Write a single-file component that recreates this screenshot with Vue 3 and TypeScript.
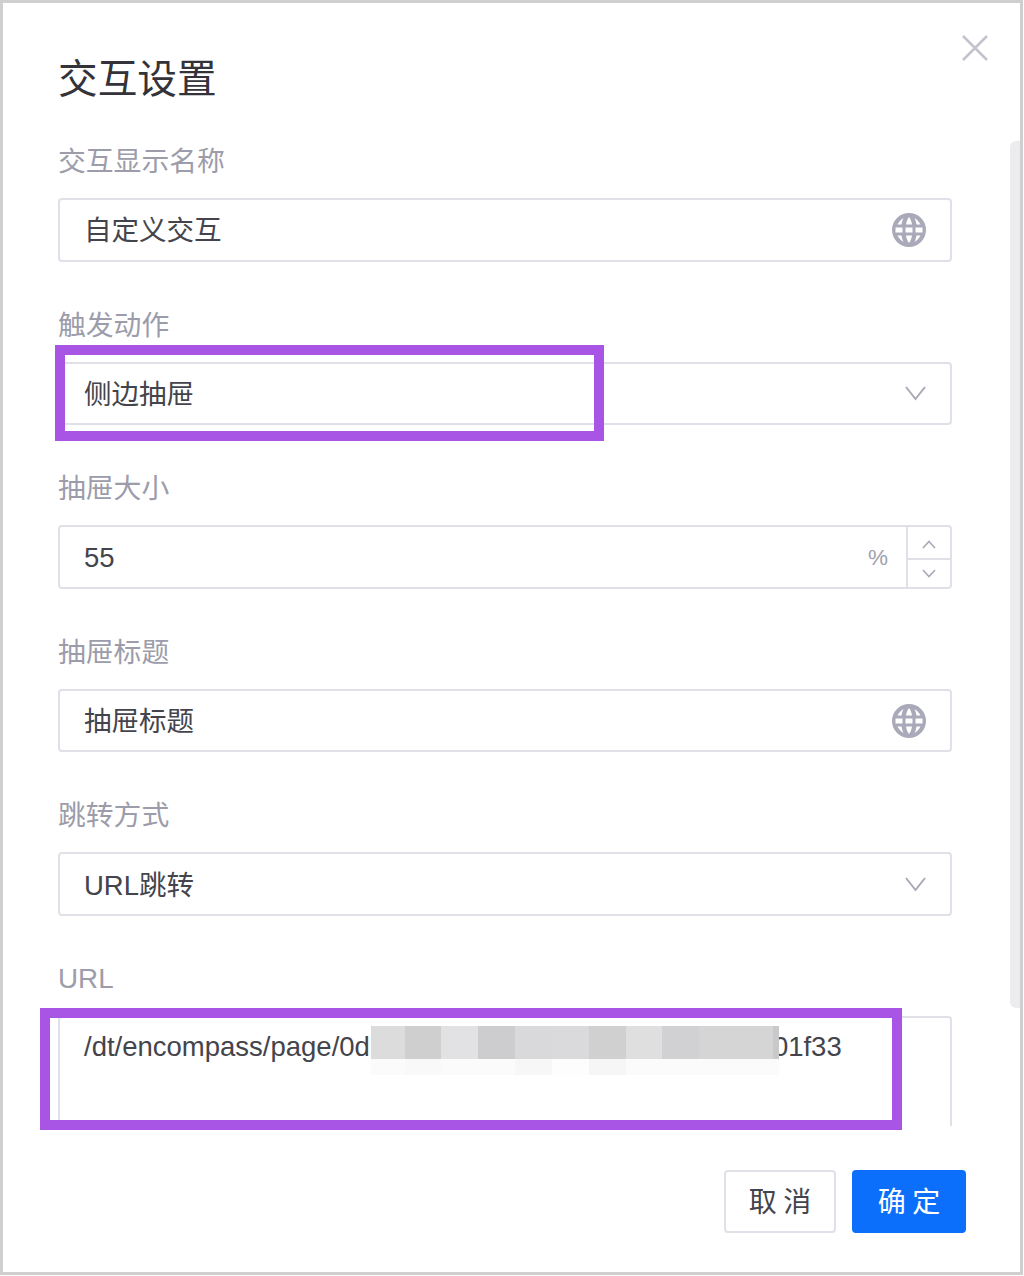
<script setup lang="ts">
const cells: [string, string, number][] = [
  ['#dcdcdd', '#fbfbfb', 34],
  ['#cfcfd0', '#f9f9f9', 36],
  ['#e2e2e4', '#fbfbfb', 37],
  ['#cdcdcf', '#fbfbfb', 37],
  ['#d9d9db', '#f7f7f7', 37],
  ['#dadadc', '#fdfdfd', 37],
  ['#d0d0d1', '#f6f6f6', 37],
  ['#dfdfdf', '#fbfbfb', 36],
  ['#d1d1d3', '#fbfbfb', 37],
  ['#d5d5d6', '#fbfbfb', 74],
  ['#c9c9cb', '#fbfbfb', 6]
]
const globeTop =
  'M6.500 12.500C8 9.500 10 7.500 12.500 6C11.500 8 11 10 10.500 12.500Z' +
  'M15 12.500C15.500 9.500 16.500 6.500 18 5C19.500 6.500 20.500 9.500 21 12.500Z' +
  'M29.500 12.500C28 9.500 26 7.500 23.500 6C24.500 8 25 10 25.500 12.500Z'
const globeMiddle = 'M4.500 15.500h7v5h-7zM14.500 15.500h7v5h-7zM24.500 15.500h7v5h-7z'
</script>

<template>
  <div class="dialog">
    <svg class="close" width="30" height="30" viewBox="0 0 30 30">
      <path d="M3 3 27 27M27 3 3 27" fill="none" stroke="#c4c4cf" stroke-width="2.6" />
    </svg>
    <h1 class="title">交互设置</h1>

    <div class="body">
      <div class="field">
        <div class="label">交互显示名称</div>
        <div class="control">
          <span class="value">自定义交互</span>
          <svg class="globe" width="36" height="36" viewBox="0 0 36 36">
            <circle cx="18" cy="18" r="17" fill="#a9a9b9" />
            <path :d="globeTop" fill="#fff" />
            <path :d="globeMiddle" fill="#fff" />
            <path :d="globeTop" fill="#fff" transform="matrix(1 0 0 -1 0 36)" />
          </svg>
        </div>
      </div>

      <div class="field">
        <div class="label">触发动作</div>
        <div class="control">
          <span class="value">侧边抽屉</span>
          <svg class="chevron" width="22" height="16" viewBox="0 0 22 16">
            <path d="M1.500 2 11 14 20.500 2" fill="none" stroke="#a9a9b7" stroke-width="2" />
          </svg>
        </div>
      </div>

      <div class="field">
        <div class="label">抽屉大小</div>
        <div class="control number">
          <span class="value">55</span>
          <span class="suffix">%</span>
          <div class="steps">
            <div class="step first">
              <svg width="14" height="9" viewBox="0 0 14 9"><path d="M1 8 7 1.500 13 8" fill="none" stroke="#a9a9b7" stroke-width="1.600" /></svg>
            </div>
            <div class="step second">
              <svg width="14" height="9" viewBox="0 0 14 9"><path d="M1 1 7 7.500 13 1" fill="none" stroke="#a9a9b7" stroke-width="1.600" /></svg>
            </div>
          </div>
        </div>
      </div>

      <div class="field">
        <div class="label">抽屉标题</div>
        <div class="control">
          <span class="value">抽屉标题</span>
          <svg class="globe" width="36" height="36" viewBox="0 0 36 36">
            <circle cx="18" cy="18" r="17" fill="#a9a9b9" />
            <path :d="globeTop" fill="#fff" />
            <path :d="globeMiddle" fill="#fff" />
            <path :d="globeTop" fill="#fff" transform="matrix(1 0 0 -1 0 36)" />
          </svg>
        </div>
      </div>

      <div class="field">
        <div class="label">跳转方式</div>
        <div class="control">
          <span class="value">URL跳转</span>
          <svg class="chevron" width="22" height="16" viewBox="0 0 22 16">
            <path d="M1.500 2 11 14 20.500 2" fill="none" stroke="#a9a9b7" stroke-width="2" />
          </svg>
        </div>
      </div>

      <div class="field">
        <div class="label latin">URL</div>
        <div class="textarea">
          <span class="url">/dt/encompass/page/0d</span><span class="mosaic"><span
            v-for="(cell, i) in cells"
            :key="i"
            class="cell"
            :style="{ width: cell[2] + 'px', background: cell[0], '--band': cell[1] }"
          ></span></span><span class="url">01f33</span>
        </div>
      </div>
    </div>

    <div class="footer">
      <button class="btn" type="button">取 消</button>
      <button class="btn primary" type="button">确 定</button>
    </div>

    <div class="scrollbar"></div>
    <div class="mark mark-select"></div>
    <div class="mark mark-url"></div>
  </div>
</template>

<style scoped>
.dialog {
  position: relative;
  box-sizing: border-box;
  width: 1023px;
  height: 1275px;
  border: 3px solid #cfcfcf;
  background: #fff;
  display: flex;
  flex-direction: column;
  font-family: "Liberation Sans", "Noto Sans CJK SC", sans-serif;
  overflow: hidden;
}
.close {
  position: absolute;
  right: 30px;
  top: 30px;
}
.title {
  margin: 0 0 -4px;
  padding: 45px 0 0 55px;
  font-size: 39.7px;
  line-height: 56px;
  font-weight: 400;
  color: #333339;
  font-family: "Noto Sans CJK SC", sans-serif;
}
.body {
  flex: none;
  height: 982px;
  margin-top: 44px;
  padding: 0 68px 0 55px;
  overflow: hidden;
}
.field {
  margin-bottom: 46px;
}
.label {
  height: 36px;
  margin-bottom: 18px;
  font-size: 27.8px;
  line-height: 35px;
  color: #9c9caa;
}
.label.latin {
  line-height: 33px;
}
.control {
  box-sizing: border-box;
  height: 63.6px;
  display: flex;
  align-items: center;
  justify-content: space-between;
  padding: 0 24px;
  border: 2px solid #e0e0e8;
  border-radius: 4px;
  background: #fff;
}
.value {
  padding-top: 3px;
  font-size: 27.5px;
  color: #44444c;
  line-height: 36px;
}
.globe {
  flex: none;
  margin: 1px -1px 0 0;
}
.chevron {
  flex: none;
  margin: 0 -1px 0 0;
  width: 23px;
}
.number {
  padding-right: 0;
}
.suffix {
  margin-left: auto;
  margin-right: 18px;
  padding-top: 2px;
  font-size: 22.5px;
  color: #a0a0ae;
}
.steps {
  flex: none;
  align-self: stretch;
  box-sizing: border-box;
  width: 44px;
  display: flex;
  flex-direction: column;
  border-left: 2px solid #e0e0e8;
}
.step {
  flex: 1;
  display: flex;
  align-items: center;
  justify-content: center;
}
.step.first {
  padding-top: 4px;
}
.step.second {
  border-top: 2px solid #e0e0e8;
}
.textarea {
  box-sizing: border-box;
  height: 160px;
  padding: 8px 24px;
  border: 2px solid #e0e0e8;
  border-radius: 4px;
  display: flex;
  align-items: flex-start;
}
.url {
  flex: none;
  padding-top: 1px;
  font-size: 27.5px;
  line-height: 40px;
  color: #44444c;
}
.mosaic {
  flex: none;
  position: relative;
  z-index: 1;
  display: flex;
  height: 49px;
  margin: 0 -6px 0 1px;
  overflow: hidden;
}
.cell {
  display: block;
  height: 33px;
  box-shadow: 0 16px 0 var(--band);
}
.footer {
  display: flex;
  justify-content: flex-end;
  gap: 16px;
  padding: 44px 54px 0 0;
}
.btn {
  box-sizing: border-box;
  width: 112px;
  height: 63px;
  padding: 0 0 4px;
  border: 2px solid #e0e0e8;
  border-radius: 4px;
  background: #fff;
  color: #44444c;
  font-size: 28px;
  font-family: "Noto Sans CJK SC", sans-serif;
}
.primary {
  width: 114px;
  border-color: #0b6ffb;
  background: #0b6ffb;
  color: #fff;
}
.scrollbar {
  position: absolute;
  left: 1007px;
  top: 138px;
  width: 13px;
  height: 867px;
  border-radius: 6px 0 0 6px;
  background: #ececee;
}
.mark {
  position: absolute;
  box-sizing: border-box;
  border: 10px solid #a855e6;
}
.mark-select {
  left: 52px;
  top: 342px;
  width: 549px;
  height: 96px;
}
.mark-url {
  left: 37px;
  top: 1005px;
  width: 862px;
  height: 122px;
}
</style>
